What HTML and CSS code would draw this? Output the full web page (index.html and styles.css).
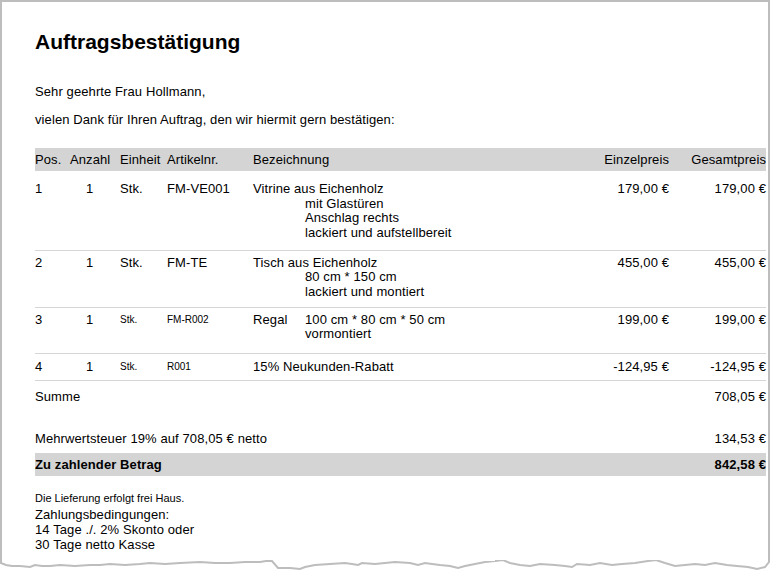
FILE: index.html
```html
<!DOCTYPE html>
<html lang="de">
<head>
    <meta charset="UTF-8">
    <meta name="viewport" content="width=device-width, initial-scale=1.0">
    <title>Auftragsbestätigung</title>
    <link rel="stylesheet" href="styles.css">
</head>
<body>
    <div class="sheet">
        <h1 class="title">Auftragsbestätigung</h1>
        <p class="greeting">Sehr geehrte Frau Hollmann,</p>
        <p class="intro">vielen Dank für Ihren Auftrag, den wir hiermit gern bestätigen:</p>

        <div class="items">
            <div class="line head">
                <div>Pos.</div>
                <div>Anzahl</div>
                <div>Einheit</div>
                <div>Artikelnr.</div>
                <div>Bezeichnung</div>
                <div class="num">Einzelpreis</div>
                <div class="num">Gesamtpreis</div>
            </div>

            <div class="line item first">
                <div>1</div>
                <div class="qty">1</div>
                <div>Stk.</div>
                <div>FM-VE001</div>
                <div class="desc">
                    <div class="desc-name">Vitrine aus Eichenholz</div>
                    <div class="desc-detail">mit Glastüren</div>
                    <div class="desc-detail">Anschlag rechts</div>
                    <div class="desc-detail">lackiert und aufstellbereit</div>
                </div>
                <div class="num">179,00 €</div>
                <div class="num">179,00 €</div>
            </div>

            <div class="line item">
                <div>2</div>
                <div class="qty">1</div>
                <div>Stk.</div>
                <div>FM-TE</div>
                <div class="desc">
                    <div class="desc-name">Tisch aus Eichenholz</div>
                    <div class="desc-detail">80 cm * 150 cm</div>
                    <div class="desc-detail">lackiert und montiert</div>
                </div>
                <div class="num">455,00 €</div>
                <div class="num">455,00 €</div>
            </div>

            <div class="line item tall">
                <div>3</div>
                <div class="qty">1</div>
                <div class="small">Stk.</div>
                <div class="small">FM-R002</div>
                <div class="desc">
                    <div class="desc-name short">Regal</div>
                    <div class="desc-detail">100 cm * 80 cm * 50 cm</div>
                    <div class="desc-detail">vormontiert</div>
                </div>
                <div class="num">199,00 €</div>
                <div class="num">199,00 €</div>
            </div>

            <div class="line item last">
                <div>4</div>
                <div class="qty">1</div>
                <div class="small">Stk.</div>
                <div class="small">R001</div>
                <div class="desc">
                    <div class="desc-name">15% Neukunden-Rabatt</div>
                </div>
                <div class="num">-124,95 €</div>
                <div class="num">-124,95 €</div>
            </div>
        </div>

        <div class="sum sum-net">
            <span>Summe</span>
            <span>708,05 €</span>
        </div>
        <div class="sum sum-tax">
            <span>Mehrwertsteuer 19% auf 708,05 € netto</span>
            <span>134,53 €</span>
        </div>
        <div class="sum sum-total">
            <span>Zu zahlender Betrag</span>
            <span>842,58 €</span>
        </div>

        <p class="delivery">Die Lieferung erfolgt frei Haus.</p>
        <p class="terms">Zahlungsbedingungen:<br>14 Tage ./. 2% Skonto oder<br>30 Tage netto Kasse</p>
    </div>
    <svg class="torn" width="770" height="11" viewBox="0 0 770 11">
        <polyline points="1,0 1,3 6,5 12,6 20,6 30,7 35,5 42,6 50,6 60,5 75,6 90,5 100,5 110,4 125,5 140,4 150,3 165,4 180,3 200,2 215,3 230,3 245,2 260,2 266,1 272,1 278,8 290,8 300,9 305,7 315,5 330,4 345,3 352,4 358,5 362,3 375,4 385,3 395,2 410,3 418,5 425,3 432,4 440,5 450,6 458,8 465,6 475,4 485,2 495,1 503,0 510,3 520,5 530,6 540,4 555,5 565,6 572,7 577,4 590,5 600,3 612,5 622,4 635,3 648,1 656,0 665,3 675,6 685,5 695,4 705,5 715,3 727,5 737,6 748,7 757,9 765,7 769,2 769,0" fill="none" stroke="#bdbdbd" stroke-width="2"/>
    </svg>
</body>
</html>
```

FILE: styles.css
```css
body {
    margin: 0;
    background-color: #ffffff;
    font-family: "Liberation Sans", Arial, sans-serif;
    font-size: 13px;
    letter-spacing: 0.1px;
    color: #000000;
}

.sheet {
    box-sizing: border-box;
    width: 770px;
    height: 560px;
    padding: 28px 2px 0 33px;
    border-top: 2px solid #bdbdbd;
    border-left: 2px solid #bdbdbd;
    border-right: 2px solid #bdbdbd;
}

.torn {
    display: block;
}

.title {
    margin: 0;
    font-size: 21px;
    line-height: 24px;
    font-weight: bold;
    letter-spacing: 0;
}

.greeting,
.intro {
    margin: 0;
    line-height: 15px;
}

.greeting {
    margin-top: 30px;
}

.intro {
    margin-top: 13px;
}

.items {
    margin-top: 21px;
}

.line {
    display: grid;
    grid-template-columns: 35px 50px 47px 86px 1fr 89px 97px;
    line-height: 14.67px;
}

.head {
    height: 23px;
    line-height: 23px;
    background-color: #d4d4d4;
}

.item {
    padding: 5px 0 7px;
    border-bottom: 1px solid #d6d6d6;
}

.item.first {
    padding: 11px 0 9px;
}

.item.tall {
    padding: 5px 0 11px;
}

.item.last {
    padding: 6px 0 5px;
}

.qty {
    padding-left: 16px;
}

.small {
    font-size: 10px;
    letter-spacing: 0;
}

.num {
    text-align: right;
}

.desc {
    display: grid;
    grid-template-columns: 52px 1fr;
}

.desc-name {
    grid-column: 1 / -1;
}

.desc-name.short {
    grid-column: auto;
}

.desc-detail {
    grid-column: 2;
}

.sum {
    display: flex;
    justify-content: space-between;
    line-height: 14.67px;
}

.sum-net {
    margin-top: 9px;
}

.sum-tax {
    margin-top: 28px;
}

.sum-total {
    margin-top: 6px;
    line-height: 23px;
    font-weight: bold;
    background-color: #d4d4d4;
}

.delivery {
    margin: 16px 0 0;
    font-size: 11px;
    line-height: 13px;
    letter-spacing: 0;
}

.terms {
    margin: 2px 0 0;
    line-height: 15px;
}
```
